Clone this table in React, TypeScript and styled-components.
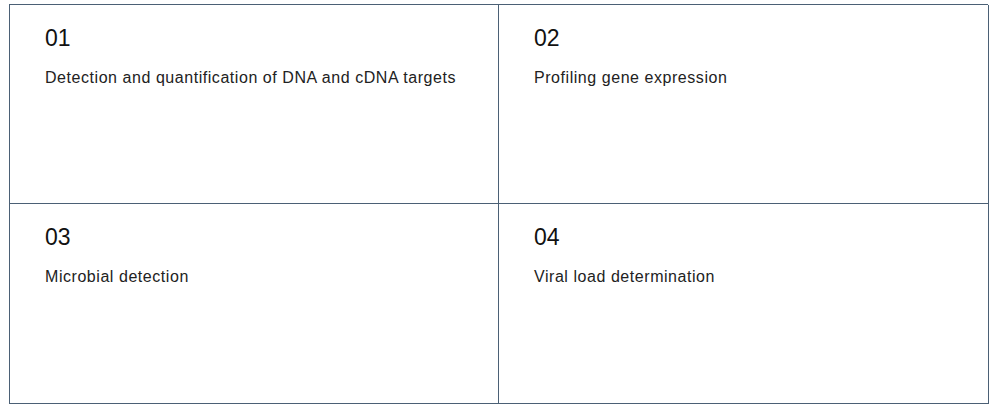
import React from "react";
import styled, { createGlobalStyle } from "styled-components";

const Global = createGlobalStyle`
  html, body { margin: 0; padding: 0; background: #ffffff; }
  body { font-family: "Liberation Sans", Arial, sans-serif; color: #1a1a1a; }
`;

const Page = styled.div`
  padding: 4px 0 0 9px;
`;

const Grid = styled.div`
  display: grid;
  grid-template-columns: 489px 490px;
  grid-template-rows: 199px 200px;
  width: 979px;
  box-sizing: border-box;
  border-top: 1px solid #4b6075;
  border-left: 1px solid #4b6075;
`;

const Cell = styled.div`
  box-sizing: border-box;
  border-right: 1px solid #4b6075;
  border-bottom: 1px solid #4b6075;
  padding: 19px 20px 0 35px;
`;

const Num = styled.div`
  font-size: 23px;
  line-height: 28px;
  color: #111;
`;

const Desc = styled.div`
  margin-top: 16px;
  font-size: 16px;
  line-height: 20px;
  letter-spacing: 0.55px;
  color: #222;
`;

const items = [
  { n: "01", t: "Detection and quantification of DNA and cDNA targets" },
  { n: "02", t: "Profiling gene expression" },
  { n: "03", t: "Microbial detection" },
  { n: "04", t: "Viral load determination" },
];

export default function App() {
  return (
    <>
      <Global />
      <Page>
        <Grid>
          {items.map((i) => (
            <Cell key={i.n}>
              <Num>{i.n}</Num>
              <Desc>{i.t}</Desc>
            </Cell>
          ))}
        </Grid>
      </Page>
    </>
  );
}
